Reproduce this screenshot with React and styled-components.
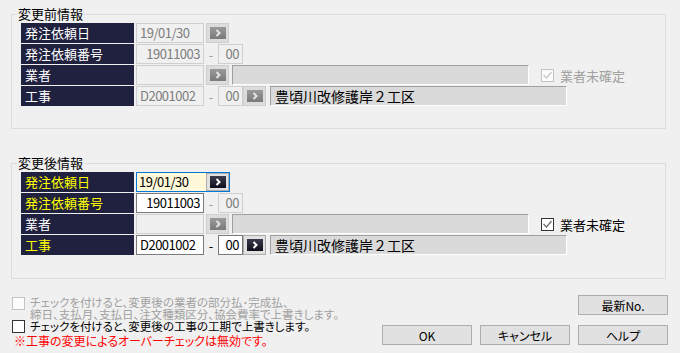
import React from 'react';
import styled, { createGlobalStyle } from 'styled-components';

const GlobalStyle = createGlobalStyle`
  html, body {
    margin: 0;
    background: #f0f0f0;
  }
  body {
    font-family: "Noto Sans CJK JP", "Noto Sans", sans-serif;
    font-size: 12px;
    color: #000;
  }
`;

const Page = styled.div`
  width: 680px;
  height: 353px;
  box-sizing: border-box;
  padding: 14px 14px 0 11px;
  display: flex;
  flex-direction: column;
`;

const GroupBox = styled.div`
  position: relative;
  box-sizing: border-box;
  height: ${p => p.$h}px;
  margin-top: ${p => p.$top || 0}px;
  border: 1px solid #dcdcdc;
  padding: 8px 0 0 9px;
  display: flex;
  flex-direction: column;
  gap: 1px;
`;

const Legend = styled.span`
  position: absolute;
  top: -9px;
  left: 5px;
  padding: 0 1px;
  background: #f0f0f0;
  font-size: 13px;
  line-height: 16px;
`;

const Row = styled.div`
  display: flex;
  align-items: center;
  height: 20px;
`;

const Label = styled.div`
  box-sizing: border-box;
  width: 113px;
  height: 20px;
  margin-right: 2px;
  padding-left: 4px;
  background: #20203f;
  color: ${p => (p.$hot ? '#ffff00' : '#ffffff')};
  font-size: 13px;
  line-height: 20px;
  white-space: nowrap;
`;

const Field = styled.div`
  box-sizing: border-box;
  width: ${p => p.$w}px;
  height: 20px;
  padding: 0 3px;
  border: 1px solid ${p => (p.$off ? '#cfcfcf' : '#7a7a7a')};
  background: ${p => (p.$off ? '#f0f0f0' : '#ffffff')};
  color: ${p => (p.$off ? '#7d7d7d' : '#000000')};
  text-align: ${p => p.$align || 'left'};
  font-size: 13px;
  letter-spacing: -0.5px;
  line-height: 18px;
  white-space: nowrap;
`;

const FocusWrap = styled.div`
  box-sizing: border-box;
  width: 94px;
  height: 20px;
  display: flex;
  border: 1px solid #0078d7;
`;

const FocusInput = styled.div`
  flex: 1;
  padding-left: 2px;
  background: #fff9d9;
  font-size: 13px;
  letter-spacing: -0.5px;
  line-height: 18px;
`;

const Dash = styled.span`
  width: 14px;
  text-align: center;
  color: ${p => (p.$off ? '#a0a0a0' : '#000000')};
  font-size: 13px;
`;

const BtnBox = styled.div`
  box-sizing: border-box;
  width: 23px;
  height: ${p => (p.$inset ? 18 : 20)}px;
  margin-left: ${p => p.$ml || 0}px;
  display: flex;
  align-items: center;
  justify-content: center;
  border: 1px solid ${p => (p.$off ? '#cfcfcf' : '#adadad')};
  background: ${p => (p.$off ? '#dcdcdc' : '#e1e1e1')};
`;

const Display = styled.div`
  box-sizing: border-box;
  width: 297px;
  height: 20px;
  margin-left: ${p => p.$ml}px;
  padding-left: 4px;
  background: #dadada;
  border-top: 1px solid #a0a0a0;
  border-left: 1px solid #a0a0a0;
  border-right: 1px solid #ffffff;
  border-bottom: 1px solid #ffffff;
  font-size: 14px;
  line-height: 18px;
  white-space: nowrap;
`;

const CheckLine = styled.label`
  display: flex;
  align-items: center;
  gap: 6px;
  margin-left: ${p => p.$ml || 0}px;
  color: ${p => (p.$off ? '#a0a0a0' : '#000000')};
  font-size: 13px;
`;

const Box = styled.span`
  box-sizing: border-box;
  flex: none;
  width: 13px;
  height: 13px;
  display: flex;
  align-items: center;
  justify-content: center;
  border: 1px solid ${p => (p.$off ? '#c3c3c3' : '#333333')};
  background: ${p => (p.$off ? '#fcfcfc' : '#ffffff')};
`;

const Footer = styled.div`
  display: flex;
  justify-content: space-between;
  margin-top: 16px;
  margin-right: -2px;
`;

const Notes = styled.div`
  display: flex;
  flex-direction: column;
  padding-left: 1px;
  font-feature-settings: "palt";
`;

const NoteRow = styled.div`
  display: flex;
  align-items: flex-start;
  gap: 5px;
  margin-top: ${p => p.$mt || 0}px;
  color: ${p => (p.$off ? '#a0a0a0' : '#000000')};

  ${Box} {
    margin-top: ${p => p.$boxTop || 0}px;
  }
`;

const NoteLines = styled.div`
  display: flex;
  flex-direction: column;
`;

const NoteLine = styled.div`
  height: ${p => p.$h || 12}px;
  font-size: 11.5px;
  line-height: ${p => p.$h || 12}px;
  white-space: nowrap;
`;

const Warning = styled.div`
  height: 14px;
  margin: 1px 0 0 2px;
  color: #ff0000;
  font-size: 12px;
  line-height: 14px;
  white-space: nowrap;
`;

const ButtonGrid = styled.div`
  display: grid;
  grid-template-columns: repeat(3, 90px);
  grid-template-rows: 20px 20px;
  column-gap: 8px;
  row-gap: 10px;
`;

const Button = styled.button`
  grid-column: ${p => p.$col};
  grid-row: ${p => p.$row};
  padding: 0;
  border: 1px solid #adadad;
  background: #e1e1e1;
  font-family: inherit;
  font-size: 12px;
  color: #000;
  font-feature-settings: "palt";
`;

const Lookup = ({ off, ml, inset }) => (
  <BtnBox $off={off} $ml={ml} $inset={inset}>
    <svg width="16" height="12" viewBox="0 0 16 12">
      <defs>
        <linearGradient id={off ? 'lg-off' : 'lg-on'} x1="0" y1="0" x2="0" y2="1">
          <stop offset="0" stopColor={off ? '#9a9a9a' : '#3a3a4e'} />
          <stop offset="1" stopColor={off ? '#7a7a7a' : '#10101c'} />
        </linearGradient>
      </defs>
      <rect x="0" y="0" width="16" height="12" fill={`url(#${off ? 'lg-off' : 'lg-on'})`} />
      <path d="M6.5 3 L9.5 6 L6.5 9" fill="none" stroke={off ? '#e4e4e4' : '#ffffff'} strokeWidth="2" />
    </svg>
  </BtnBox>
);

const Check = ({ off }) => (
  <Box $off={off}>
    <svg width="9" height="8" viewBox="0 0 9 8">
      <path d="M0.5 4 L3.5 7 L8.5 1" fill="none" stroke={off ? '#c8c8c8' : '#6b6b6b'} strokeWidth="1.2" />
    </svg>
  </Box>
);

const EmptyBox = ({ off }) => <Box $off={off} />;

const BeforeGroup = () => (
  <GroupBox $h={115}>
    <Legend>変更前情報</Legend>
    <Row>
      <Label>発注依頼日</Label>
      <Field $w={68} $off>19/01/30</Field>
      <Lookup off ml={2} />
    </Row>
    <Row>
      <Label>発注依頼番号</Label>
      <Field $w={68} $off $align="right">19011003</Field>
      <Dash $off>-</Dash>
      <Field $w={25} $off $align="right">00</Field>
    </Row>
    <Row>
      <Label>業者</Label>
      <Field $w={68} $off />
      <Lookup off ml={2} />
      <Display $ml={3} />
      <CheckLine $off $ml={12}>
        <Check off />
        業者未確定
      </CheckLine>
    </Row>
    <Row>
      <Label>工事</Label>
      <Field $w={68} $off>D2001002</Field>
      <Dash $off>-</Dash>
      <Field $w={25} $off $align="right">00</Field>
      <Lookup off />
      <Display $ml={4}>豊頃川改修護岸２工区</Display>
    </Row>
  </GroupBox>
);

const AfterGroup = () => (
  <GroupBox $h={116} $top={34}>
    <Legend>変更後情報</Legend>
    <Row>
      <Label $hot>発注依頼日</Label>
      <FocusWrap>
        <FocusInput>19/01/30</FocusInput>
        <Lookup inset />
      </FocusWrap>
    </Row>
    <Row>
      <Label $hot>発注依頼番号</Label>
      <Field $w={68} $align="right">19011003</Field>
      <Dash $off>-</Dash>
      <Field $w={25} $off $align="right">00</Field>
    </Row>
    <Row>
      <Label>業者</Label>
      <Field $w={68} $off />
      <Lookup off ml={2} />
      <Display $ml={3} />
      <CheckLine $ml={12}>
        <Check />
        業者未確定
      </CheckLine>
    </Row>
    <Row>
      <Label $hot>工事</Label>
      <Field $w={68}>D2001002</Field>
      <Dash>-</Dash>
      <Field $w={25} $align="right">00</Field>
      <Lookup />
      <Display $ml={4}>豊頃川改修護岸２工区</Display>
    </Row>
  </GroupBox>
);

export default function App() {
  return (
    <>
      <GlobalStyle />
      <Page>
        <BeforeGroup />
        <AfterGroup />
        <Footer>
          <Notes>
            <NoteRow $off $boxTop={1} $mt={1}>
              <EmptyBox off />
              <NoteLines>
                <NoteLine>チェックを付けると、変更後の業者の部分払･完成払、</NoteLine>
                <NoteLine>締日、支払月、支払日、注文種類区分、協会費率で上書きします。</NoteLine>
              </NoteLines>
            </NoteRow>
            <NoteRow>
              <EmptyBox />
              <NoteLines>
                <NoteLine $h={13}>チェックを付けると、変更後の工事の工期で上書きします。</NoteLine>
              </NoteLines>
            </NoteRow>
            <Warning>※工事の変更によるオーバーチェックは無効です。</Warning>
          </Notes>
          <ButtonGrid>
            <Button $col={3} $row={1}>最新No.</Button>
            <Button $col={1} $row={2}>OK</Button>
            <Button $col={2} $row={2}>キャンセル</Button>
            <Button $col={3} $row={2}>ヘルプ</Button>
          </ButtonGrid>
        </Footer>
      </Page>
    </>
  );
}
